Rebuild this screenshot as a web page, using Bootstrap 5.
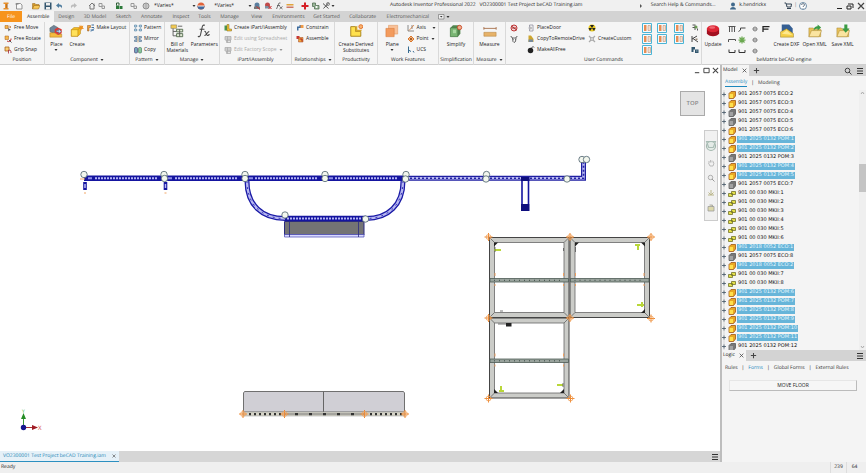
<!DOCTYPE html>
<html lang="en">
<head>
<meta charset="utf-8">
<meta name="viewport" content="width=device-width, initial-scale=1">
<title>Autodesk Inventor Professional 2022</title>
<link href="https://cdn.jsdelivr.net/npm/bootstrap@5.3.0/dist/css/bootstrap.min.css" rel="stylesheet">
<style>
body{font-family:"Open Sans","Noto Sans",sans-serif;font-size:5px;line-height:7px;color:#222;background:#f4f4f4;text-rendering:geometricPrecision}
svg{display:block;flex:none}
button,select,a{color:inherit}
.tool{border:0;background:none;padding:0;font-size:5px;line-height:7px;color:#222;white-space:nowrap}
.tool:disabled{color:#aaa;opacity:1}
.ic{width:8px;height:8px}
.ic-lg{width:14px;height:14px}
.ic-sm{width:4px;height:4px}
.titlebar{height:11px;background:#f0f0f0}
.quick{display:grid;grid-template-columns:13fr 17fr 12fr 11fr 15fr 17fr 10fr 17fr 15fr 12fr 12fr 43fr 17fr 38fr 11fr 11fr 11fr 15fr 11fr 10fr 9fr 5fr;flex:337 1 0;padding-left:2px;align-items:center}
.quick select{appearance:none;border:0;background:none;font-size:5px;line-height:7px;padding:0;width:34px}
.caption{flex:251 1 0;padding-left:54px;white-space:pre}
.winbar{display:grid;grid-template-columns:12fr 80fr 10fr 46fr 10fr 5fr 37fr 11fr 11fr 9fr;flex:229 1 0;align-items:center;white-space:nowrap}
.tabs{height:11px;background:#d3d3d3;display:grid;grid-template-columns:22fr 32fr 24fr 33fr 24fr 32fr 26fr 21fr 29fr 25fr 38fr 38fr 34fr 56fr 14fr 414fr;text-align:center;color:#555}
.tabs a,.tabs button{text-decoration:none;line-height:12px;color:#555;white-space:nowrap}
.tabs .file-tab{background:#f7941d;color:#fff}
.tabs .on{background:#f4f4f4;color:#111}
.ribbon{display:grid;grid-template-columns:45fr 85fr 35fr 55fr 72fr 43fr 43fr 61fr 35fr 32fr 196fr 164fr;height:43px;border-bottom:1px solid #cfcfcf;background:#f5f5f5}
.group{display:flex;flex-direction:column;min-width:0;border-right:1px solid #d9d9d9}
.group:last-child{border-right:0}
.group-body{display:grid;flex:1;min-height:0}
.group-name{height:10px;line-height:10px;text-align:center;white-space:nowrap;display:flex;align-items:center;justify-content:center;gap:2px}
.stack{display:grid;grid-template-rows:repeat(3,11px);min-width:0}
.stack .tool{display:flex;align-items:center;gap:2px}
.stack>svg{margin-top:3px}
.big{display:flex;flex-direction:column;align-items:center;padding-top:2px;line-height:6px}
.big .ic-lg{margin-bottom:3px}
.big .ic-sm{margin-top:1px}
.g-comp{grid-template-columns:23fr 19fr 43fr}
.g-man{grid-template-columns:25fr 30fr}
.g-work{grid-template-columns:29fr 32fr}
.g-user{grid-template-columns:17fr 61fr 54fr 15fr 17fr 17fr 10fr;padding-left:4px}
.g-be{grid-template-columns:22fr 10fr 13fr 11fr 15fr 27fr 29fr 27fr 10fr}
.tile{width:10px;height:10px}
.main-area{display:grid;grid-template-columns:720fr 146fr;grid-template-rows:minmax(0,1fr);flex:1;min-height:0}
.sheet{background:#fff;position:relative;overflow:hidden}
.sheet>svg{width:100%;height:100%}
.float-box{position:absolute;right:15px;top:26px;width:25px;height:25px;border:1px solid #aaa;background:#e4e4e4;color:#888;font-size:6px;font-weight:600;line-height:23px;text-align:center;padding:0}
.navtools{position:absolute;right:2px;top:65px;width:14px;border:1px solid #ccc;background:#f1f1f1;display:flex;flex-direction:column;align-items:center;gap:7px;padding:9px 0 8px}
.navtools button{border:0;background:none;padding:0}
.winctl{position:absolute;right:1px;top:2px;display:flex;gap:2px}
.winctl svg{width:7px;height:7px}
.docbar{height:11px;background:#d6d6d6}
.doc-tab{background:#e6f1f8;border-bottom:1px solid #2c8fc0;color:#2385b5;padding:0 3px;gap:4px;flex:113 1 0;line-height:10px}
.doc-rest{flex:599 1 0;padding-right:1px}
.status{height:11px;background:#efefef;line-height:11px;padding-left:1px}
.status .num{border-left:1px solid #ddd;width:16px;text-align:center}
.left{min-width:0}
.side{min-width:0;border-left:2px solid #bdbdbd;background:#f4f4f4}
.pane-a{flex:285 1 0;min-height:0}
.pane-b{flex:112 1 0;min-height:0}
.pane-head{height:11px;background:#d3d3d3;gap:4px;padding-right:2px;flex:none}
.pane-tab{background:#f4f4f4;padding:0 2px 0 1px;height:11px;gap:4px;line-height:11px}
.pane-nav{height:14px;padding-left:3px;gap:4px;flex:none;align-items:center}
.pane-nav a{text-decoration:none;color:#333;white-space:nowrap}
.pane-nav .cur{color:#1b87bd}
.pane-nav .cur-line{border-bottom:1px solid #1b87bd}
.tree{list-style:none;margin:0;padding:0;font-family:"DejaVu Sans",sans-serif;font-size:5px;line-height:9px;color:#111;overflow:hidden;flex:1}
.tree li{height:9px;display:flex;align-items:center;white-space:nowrap;gap:1px}
.tree li svg:first-child{width:4px;height:9px;margin-right:1px}
.tree span{line-height:7px;padding:0 1px}
.tree .sel span{background:#67b5d9;color:#e6f7ff}
.sbar{width:7px;background:#efefef;flex:none;display:flex;flex-direction:column;align-items:center}
.thumb{background:#c4c4c4;width:7px;height:28px;margin-top:69px}
.rule-btn{border:1px solid #e6e6e6;border-right-color:#bbb;border-bottom-color:#bbb;background:#f6f6f6;font-size:5px;line-height:9px;padding:0;margin:5px 9px 0 7px;display:block}
</style>
<script src="https://cdn.jsdelivr.net/npm/bootstrap@5.3.0/dist/js/bootstrap.bundle.min.js"></script>
</head>
<body class="vh-100 d-flex flex-column overflow-hidden">
<svg class="d-none" aria-hidden="true">
<symbol id="dn" viewBox="0 0 8 8"><path d="M1 2h6L4 6z" fill="#333"/></symbol>
<symbol id="x" viewBox="0 0 8 8"><path d="M1 1l6 6M7 1L1 7" stroke="#444" stroke-width="1.2"/></symbol>
<symbol id="plus" viewBox="0 0 8 8"><path d="M4 1v6M1 4h6" stroke="#444" stroke-width="1.2"/></symbol>
<symbol id="menu" viewBox="0 0 8 8"><path d="M1 1.5h6M1 4h6M1 6.5h6" stroke="#333"/></symbol>
<symbol id="mag" viewBox="0 0 8 8"><circle cx="3.5" cy="3.5" r="2.3" fill="none" stroke="#444"/><path d="M5 5l2.500 2.500" stroke="#444"/></symbol>
<symbol id="inv" viewBox="0 0 16 16"><path d="M3 1h10v3h-3v8h3v3H3v-3h3V4H3z" fill="#e8912d"/><path d="M9 4h2v8H9z" fill="#9b5410"/></symbol>
<symbol id="new" viewBox="0 0 16 16"><path d="M3 3h8l3 3v8H3z" fill="#f8f8f8" stroke="#777" stroke-width="1.500"/><path d="M1 4h6" stroke="#777" stroke-width="2"/></symbol>
<symbol id="open" viewBox="0 0 16 16"><path d="M1 14V3h5l2 2h6v3" fill="#d49a2a" stroke="#94641a"/><path d="M1 14l3-7h12l-3 7z" fill="#f7c757" stroke="#94641a"/></symbol>
<symbol id="save" viewBox="0 0 16 16"><path d="M1 1h14v14H1z" fill="#34566f"/><path d="M4 2h8v5H4zM4 10h8v5H4z" fill="#eee"/></symbol>
<symbol id="undo" viewBox="0 0 16 16"><path d="M8 2L2 7l6 5V9c4 0 5 1 5 4 3-5 0-8-5-8z" fill="#4e7c9e"/></symbol>
<symbol id="redo" viewBox="0 0 16 16"><path d="M8 2l6 5-6 5V9c-4 0-5 1-5 4-3-5 0-8 5-8z" fill="#bbb"/></symbol>
<symbol id="home" viewBox="0 0 16 16"><path d="M2 8l6-6 6 6M4 7v7h8V3" fill="none" stroke="#777" stroke-width="2"/></symbol>
<symbol id="pair" viewBox="0 0 16 16"><path d="M2 3h6v6H2zM8 8h5v5H8z" fill="none" stroke="#999" stroke-width="2"/></symbol>
<symbol id="lock" viewBox="0 0 16 16"><path d="M2 7h6v7H2zM9 8h6v6H9z" fill="#2c7a3a"/><path d="M3 7V2h5v5" fill="none" stroke="#315c38" stroke-width="2"/></symbol>
<symbol id="ball" viewBox="0 0 16 16"><circle cx="8" cy="8" r="6" fill="#ddd" stroke="#777" stroke-width="1.500"/><path d="M3 6h10M3 10h10M8 2v12" stroke="#888"/></symbol>
<symbol id="sphere" viewBox="0 0 16 16"><circle cx="8" cy="8" r="7" fill="#e0633b"/><path d="M1 8a7 7 0 0014 0z" fill="#416a9e"/><path d="M2 7h12v2H2z" fill="#eee"/></symbol>
<symbol id="sph2" viewBox="0 0 16 16"><circle cx="8" cy="6" r="5" fill="#5a7fa0"/><path d="M2 9h12v5H2z" fill="#777"/><path d="M7 9l7 6" stroke="#c33" stroke-width="2"/></symbol>
<symbol id="sph3" viewBox="0 0 16 16"><circle cx="7" cy="6" r="5" fill="#c04a4a"/><path d="M2 8h9v5H2z" fill="#7d8fa0"/><path d="M9 8l6 6M15 8l-6 6" stroke="#c22" stroke-width="2"/></symbol>
<symbol id="fxs" viewBox="0 0 16 16"><path d="M3 14L8 2h3M4 7h6M9 9l6 5M15 9l-6 5" fill="none" stroke="#555" stroke-width="1.600"/></symbol>
<symbol id="eq" viewBox="0 0 16 16"><path d="M1 4h14v3H1z" fill="#e2a43b"/><path d="M1 9h14v3H1z" fill="#c76"/></symbol>
<symbol id="cross" viewBox="0 0 16 16"><path d="M6 1h4v5h5v4h-5v5H6v-5H1V6h5z" fill="#d51f26"/></symbol>
<symbol id="gear" viewBox="0 0 16 16"><path d="M1 2h6v5h7v7H5V9H1z" fill="#9bb79b" stroke="#4e6b4e" stroke-width="1.500"/><circle cx="9" cy="10" r="2" fill="#fff"/></symbol>
<symbol id="tools" viewBox="0 0 16 16"><path d="M2 3l11 10M13 2L3 13" stroke="#555" stroke-width="2"/><circle cx="12" cy="4" r="3" fill="none" stroke="#666" stroke-width="1.500"/></symbol>
<symbol id="move" viewBox="0 0 16 16"><path d="M2 3h6v6H2z" fill="#f6b74a" stroke="#a65e1a"/><path d="M8 8l6 4-3 .5L9 15z" fill="#555"/><path d="M10 3v5M13 4v4" stroke="#c2712d" stroke-width="1.500"/></symbol>
<symbol id="rot" viewBox="0 0 16 16"><path d="M2 2h7v7H2z" fill="#f6b74a" stroke="#a65e1a"/><path d="M6 12a5 5 0 008-5" fill="none" stroke="#b33" stroke-width="2"/><path d="M10 10l5 5" stroke="#555" stroke-width="2"/></symbol>
<symbol id="grip" viewBox="0 0 16 16"><path d="M2 2h8v8H2z" fill="#f9cd73" stroke="#a65e1a" stroke-width="1.500"/><path d="M9 8v7M9 9c4-2 5 0 5 5" fill="none" stroke="#a34" stroke-width="1.700"/></symbol>
<symbol id="place" viewBox="0 0 32 32"><path d="M2 9l9-6 9 5v9l-9 5-9-5z" fill="#70869b" stroke="#455"/><path d="M2 20h12l3 3h12v7H2z" fill="#f4bb3f" stroke="#a86b18"/><path d="M13 12l7-4 9 4v9l-8 4-8-5z" fill="#dc3b34"/><path d="M17 15h5v-4l6 6-6 5v-4h-5z" fill="#bfe2fb" stroke="#357"/></symbol>
<symbol id="create" viewBox="0 0 32 32"><path d="M3 13l6-5h15v14l-6 6H3z" fill="#f3bc20" stroke="#a97200"/><path d="M3 13h15v15H3z" fill="#ffe15b" stroke="#a97200"/><path d="M18 13l6-5" stroke="#a97200"/><path d="M25 1l1.500 4 4-1.500L29 8l3 3-5 .5L25 16l-2-5-4-.5L22 7l-2-4 4 2z" fill="#ee9120"/></symbol>
<symbol id="layout" viewBox="0 0 16 16"><path d="M1 3h6v4H4v7H1z" fill="#f3a33d" stroke="#8d551f"/><path d="M9 2h5M9 7h5M7 12h7M14 9l-6 6" stroke="#3d6f9e" stroke-width="2"/></symbol>
<symbol id="patt" viewBox="0 0 16 16"><path d="M1 2h4v4H1zM11 2h4v4h-4zM1 10h4v4H1zM11 10h4v4h-4z" fill="#bcd7e9" stroke="#356b91"/><path d="M6 4h4M6 12h4M3 7v3M13 7v3" stroke="#356b91" stroke-dasharray="1 1"/></symbol>
<symbol id="mirr" viewBox="0 0 16 16"><path d="M1 3h5v10H1v-3h3V6H1zM15 3h-5v10h5v-3h-3V6h3z" fill="#a5bfd3" stroke="#385d80"/><path d="M8 1v14" stroke="#c83"/></symbol>
<symbol id="copy" viewBox="0 0 16 16"><rect x="1" y="3" width="6" height="11" rx="2" fill="#73a7bd" stroke="#315"/><rect x="9" y="3" width="6" height="11" rx="2" fill="#8cc69a" stroke="#264"/></symbol>
<symbol id="bom" viewBox="0 0 32 32"><path d="M2 2h13v8H2z" fill="#f2ca52" stroke="#665"/><path d="M7 10v17h8M7 17h8" fill="none" stroke="#555" stroke-width="2"/><path d="M15 12h14v6H15zM15 22h14v7H15z" fill="#dfe9d4" stroke="#4e6648" stroke-width="2"/><path d="M22 12v17M18 5h10" stroke="#555" stroke-width="2"/></symbol>
<symbol id="fx" viewBox="0 0 32 32"><path d="M18 3c-5-2-6 2-7 8L8 25c-1 4-3 5-6 3M6 12h11M17 17c4-2 4 11 8 9 2 0 3-2 3-3M28 17c-4 0-7 10-11 9" fill="none" stroke="#444" stroke-width="2.400"/></symbol>
<symbol id="ipart" viewBox="0 0 16 16"><path d="M1 3h6v10H1z" fill="#4a9650"/><path d="M6 1h4v9h5v4H6z" fill="#f0c43b" stroke="#856517"/></symbol>
<symbol id="dis" viewBox="0 0 16 16"><path d="M2 3h12v7H2zM5 10h8v5H5zM2 6h12M7 3v12" fill="#e4e4e4" stroke="#aaa" stroke-width="1.500"/></symbol>
<symbol id="cons" viewBox="0 0 16 16"><path d="M2 13V5h5V2h3v6H5v5z" fill="#3f6d9e"/><path d="M9 2h6v6H9z" fill="#f09b49"/></symbol>
<symbol id="asm" viewBox="0 0 16 16"><path d="M1 2h6v6H1z" fill="#c93535"/><path d="M5 5h9v9H5z" fill="#f2a83f" stroke="#9d3f20"/><path d="M7 8h5v5" fill="none" stroke="#a22" stroke-width="2"/></symbol>
<symbol id="derive" viewBox="0 0 32 32"><path d="M4 6h11v11h12v11H4z" fill="#ffe14e" stroke="#a27b12" stroke-width="2"/><path d="M15 17l4-4h11l-3 4zM15 17l4-4V4l-4 2z" fill="#d6a92a"/><circle cx="27" cy="6" r="4.500" fill="#f7b271" stroke="#e36c1f" stroke-width="2"/></symbol>
<symbol id="plane" viewBox="0 0 32 32"><path d="M8 3h21v20H8z" fill="#f9c198" stroke="#d9874b"/><path d="M2 10h19v19H2z" fill="#f39b5d" stroke="#d26c2a"/></symbol>
<symbol id="axis" viewBox="0 0 16 16"><path d="M2 2v12h12M10 2v8" fill="none" stroke="#666" stroke-width="1.500"/><path d="M4 13L14 2" stroke="#d9772d" stroke-width="1.500"/></symbol>
<symbol id="point" viewBox="0 0 16 16"><path d="M8 2l6 6-6 6-6-6z" fill="#f2b27c" stroke="#d9772d" stroke-width="2"/><circle cx="8" cy="8" r="2" fill="#8a4313"/></symbol>
<symbol id="ucs" viewBox="0 0 16 16"><path d="M3 1v13M3 8l5 3M12 10l2 3" fill="none" stroke="#356b91" stroke-width="2"/></symbol>
<symbol id="simp" viewBox="0 0 32 32"><path d="M3 9l6-6h17v19l-6 7H3z" fill="#52854f"/><path d="M3 9h17v20H3z" fill="#79b573" stroke="#3c6c3c"/><path d="M9 13h7v8H9z" fill="#a8d6a0"/><circle cx="24" cy="8" r="5" fill="#f0b18f" stroke="#c84727" stroke-width="2"/></symbol>
<symbol id="meas" viewBox="0 0 32 32"><path d="M2 10h28M2 7v6M30 7v6" stroke="#a56d46" stroke-width="2"/><path d="M2 19h28v9H2z" fill="#e6b269" stroke="#a9722b"/></symbol>
<symbol id="no" viewBox="0 0 16 16"><circle cx="8" cy="8" r="6" fill="#f4d5d5" stroke="#bd3434" stroke-width="2"/><path d="M3 4l10 8M4 8h8" stroke="#a33" stroke-width="2"/></symbol>
<symbol id="bull" viewBox="0 0 16 16"><path d="M2 2c0 4 3 3 5 4h2c2-1 5 0 5-4M5 6l1 7 2 2 3-2 1-7M6 9h1M10 9h1" fill="none" stroke="#333" stroke-width="1.500"/></symbol>
<symbol id="door" viewBox="0 0 16 16"><path d="M5 2h7v12H5zM3 8h6" fill="none" stroke="#889" stroke-width="1.500"/><circle cx="7" cy="8" r="3" fill="#bbb"/></symbol>
<symbol id="drive" viewBox="0 0 16 16"><path d="M3 1h5l5 7v6H3z" fill="#cda52e"/><path d="M3 9h9v5H3z" fill="#788a99"/></symbol>
<symbol id="bomb" viewBox="0 0 16 16"><circle cx="7" cy="9" r="5.500" fill="#222"/><path d="M9 4l3-3 2 2" fill="none" stroke="#444" stroke-width="2"/></symbol>
<symbol id="rad" viewBox="0 0 16 16"><circle cx="8" cy="8" r="7" fill="#e8c81f"/><path d="M8 8L4 2h8zM8 8H1l3 6zM8 8h7l-3 6z" fill="#222"/></symbol>
<symbol id="cust" viewBox="0 0 16 16"><path d="M2 2l12 12M14 2L2 14" stroke="#aaa" stroke-width="2.500"/><circle cx="8" cy="8" r="3" fill="#ddd" stroke="#888"/></symbol>
<symbol id="tile" viewBox="0 0 20 20"><path d="M1 1h18v18H1z" fill="#f4fbff" stroke="#4bb4d5" stroke-width="2"/><path d="M4 4h5v12H4z" fill="#e88e55"/><path d="M12 5h5v10h-5z" fill="#f2ddcd" stroke="#b98365"/></symbol>
<symbol id="ma" viewBox="0 0 16 16"><path d="M3 2h6M3 7h9M8 3v9M13 9v4" stroke="#555" stroke-width="2"/><circle cx="10" cy="6" r="3" fill="#6a9a55"/></symbol>
<symbol id="mb" viewBox="0 0 16 16"><path d="M2 2v12M2 8l10-6M4 7l10 7" stroke="#444" stroke-width="2"/><path d="M9 7h4v3H9z" fill="#987"/></symbol>
<symbol id="mc" viewBox="0 0 16 16"><path d="M1 2h7v5H5v5H1zM8 7h7v7H8z" fill="#31566e"/><path d="M10 10h3" stroke="#fff"/></symbol>
<symbol id="update" viewBox="0 0 32 32"><path d="M2 11v10c3 9 25 9 28 0V11z" fill="#a31020"/><ellipse cx="16" cy="11" rx="14" ry="8" fill="#dc2534"/><ellipse cx="14" cy="8" rx="7" ry="3" fill="#ef6670"/></symbol>
<symbol id="l1" viewBox="0 0 16 16"><path d="M1 3h14M3 3v11M8 3v11M13 3v11" stroke="#555" stroke-width="2"/></symbol>
<symbol id="l2" viewBox="0 0 16 16"><path d="M1 13l4-3V6h10" fill="none" stroke="#444" stroke-width="2"/></symbol>
<symbol id="l3" viewBox="0 0 16 16"><circle cx="8" cy="8" r="4" fill="#ccc" stroke="#888" stroke-width="2"/><path d="M3 8h10" stroke="#777"/></symbol>
<symbol id="l4" viewBox="0 0 16 16"><path d="M2 14V3h13M2 8h11" fill="none" stroke="#222" stroke-width="2.500"/></symbol>
<symbol id="l5" viewBox="0 0 16 16"><path d="M1 12V7h14v3" fill="none" stroke="#555" stroke-width="2"/></symbol>
<symbol id="l6" viewBox="0 0 16 16"><path d="M8 1v14M1 8h14M3 3l10 10M13 3L3 13" stroke="#6aa84f" stroke-width="2.500"/></symbol>
<symbol id="l7" viewBox="0 0 16 16"><path d="M2 5v6h12V6" fill="none" stroke="#333" stroke-width="2"/></symbol>
<symbol id="dxf" viewBox="0 0 32 32"><path d="M4 1h17l8 9v12H4z" fill="#355f93"/><path d="M1 18l14-7 16 11v8H1z" fill="#f4cf48" stroke="#8a7428"/><path d="M4 22l11-8 13 11z" fill="#ffe98e"/></symbol>
<symbol id="oxml" viewBox="0 0 32 32"><path d="M2 9h10l3 3h14v17H2z" fill="#e7c25b" stroke="#a17b25"/><path d="M2 29l6-14h23l-6 14z" fill="#fae4a0" stroke="#a17b25"/><path d="M13 15c0-8 5-10 9-10V1l8 7-8 7v-4c-4 0-6 0-9 4z" fill="#3b9b45"/></symbol>
<symbol id="sxml" viewBox="0 0 32 32"><path d="M2 9h10l3 3h14v17H2z" fill="#e7c25b" stroke="#a17b25"/><path d="M2 29l6-14h23l-6 14z" fill="#fae4a0" stroke="#a17b25"/><path d="M19 1h7v9h5l-9 10-8-10h5z" fill="#3b9b45"/></symbol>
<symbol id="user" viewBox="0 0 16 16"><circle cx="8" cy="5" r="4" fill="#41698c"/><path d="M2 15c0-7 12-7 12 0z" fill="#41698c"/></symbol>
<symbol id="cart" viewBox="0 0 16 16"><path d="M1 2h3l2 8h8l1-6H5M6 13h8" fill="none" stroke="#345" stroke-width="2"/></symbol>
<symbol id="help" viewBox="0 0 16 16"><circle cx="8" cy="8" r="7" fill="#fff" stroke="#41698c" stroke-width="1.500"/><path d="M5 6c1-4 6-3 6 0 0 2-3 2-3 4M8 12v1" fill="none" stroke="#345" stroke-width="1.600"/></symbol>
<symbol id="min" viewBox="0 0 8 8"><path d="M1 6.500h5" stroke="#222"/></symbol>
<symbol id="max" viewBox="0 0 8 8"><path d="M1 1.500h6v5H1z" fill="none" stroke="#333"/></symbol>
<symbol id="rest" viewBox="0 0 8 8"><path d="M2 2h5v4M1 4h4v3H1z" fill="none" stroke="#222"/></symbol>
<symbol id="exp" viewBox="0 0 4 9"><path d="M2 0v9" stroke="#bbb" stroke-width=".5"/><path d="M0 4.500h4M2 2.500v4" stroke="#456" stroke-width=".8"/></symbol>
<symbol id="cy" viewBox="0 0 16 16"><path d="M2 5l4-4h9v9l-4 5H2z" fill="#e9a823" stroke="#9c4f10" stroke-width="1.500"/><path d="M3 6h7v8H3z" fill="#ffe04c"/></symbol>
<symbol id="cg" viewBox="0 0 16 16"><path d="M2 5l4-4h9v9l-4 5H2z" fill="#777" stroke="#555" stroke-width="1.500"/><path d="M3 6h7v8H3z" fill="#a2a2a2"/></symbol>
<symbol id="mk" viewBox="0 0 16 16"><path d="M1 7h8v6H1zM7 3h8v6H7z" fill="#e3df49" stroke="#6c6b24" stroke-width="1.500"/></symbol>
<symbol id="wheel" viewBox="0 0 16 16"><circle cx="8" cy="8" r="6" fill="#e4ebe7" stroke="#a3b8ae" stroke-width="1.600"/><path d="M2 2h12l-3 8H5z" fill="none" stroke="#a9bdb5" stroke-width="1.500"/></symbol>
<symbol id="hand" viewBox="0 0 16 16"><path d="M4 8V4M7 7V2M10 7V3M13 8V5M3 8l3 6h6l2-6" fill="none" stroke="#aaa" stroke-width="1.500"/></symbol>
<symbol id="zoom" viewBox="0 0 16 16"><circle cx="7" cy="7" r="4.500" fill="#eee" stroke="#999" stroke-width="1.500"/><path d="M10 10l5 5" stroke="#999" stroke-width="2"/></symbol>
<symbol id="orbit" viewBox="0 0 16 16"><path d="M8 2v9M3 7l5 5 5-5M2 12h12" fill="none" stroke="#bbb78c" stroke-width="2"/></symbol>
<symbol id="look" viewBox="0 0 16 16"><path d="M2 5h12v9H2zM5 2h6v3" fill="#ddd9ac" stroke="#999" stroke-width="1.500"/></symbol>
<symbol id="drop" viewBox="0 0 16 12"><path d="M1 1h11v9H1z" fill="#eee" stroke="#555"/><path d="M4 4h5L6.500 7z" fill="#333"/></symbol>
</svg>

<header class="titlebar d-flex align-items-center">
<div class="quick">
<svg class="ic"><use href="#inv"/></svg><svg class="ic"><use href="#new"/></svg><svg class="ic"><use href="#open"/></svg><svg class="ic"><use href="#save"/></svg><svg class="ic"><use href="#undo"/></svg><svg class="ic"><use href="#redo"/></svg><svg class="ic"><use href="#home"/></svg><svg class="ic"><use href="#pair"/></svg><svg class="ic"><use href="#lock"/></svg><svg class="ic"><use href="#pair"/></svg><svg class="ic"><use href="#ball"/></svg>
<div class="d-flex align-items-center gap-1"><select aria-label="Material"><option>*Varies*</option></select><svg class="ic-sm"><use href="#dn"/></svg></div>
<svg class="ic"><use href="#sphere"/></svg>
<div class="d-flex align-items-center"><select aria-label="Appearance"><option>*Varies*</option></select><svg class="ic-sm"><use href="#dn"/></svg></div>
<svg class="ic"><use href="#sph2"/></svg><svg class="ic"><use href="#sph3"/></svg><svg class="ic"><use href="#fxs"/></svg><svg class="ic"><use href="#eq"/></svg><svg class="ic"><use href="#cross"/></svg><svg class="ic"><use href="#gear"/></svg><svg class="ic"><use href="#tools"/></svg><svg class="ic-sm"><use href="#dn"/></svg>
</div>
<div class="caption">Autodesk Inventor Professional 2022   VO2300001 Test Project beCAD Training.iam</div>
<div class="winbar"><svg class="ic-sm"><path d="M1 0l2 2-2 2z" fill="#555"/></svg><span>Search Help &amp; Commands...</span><svg class="ic"><use href="#user"/></svg><span>k.hendrickx</span><svg class="ic"><use href="#cart"/></svg><span class="text-secondary">|</span><svg class="ic"><use href="#help"/></svg>
<button class="tool" aria-label="Minimize"><svg class="ic"><use href="#min"/></svg></button><button class="tool" aria-label="Restore"><svg class="ic"><use href="#rest"/></svg></button><button class="tool" aria-label="Close"><svg class="ic"><use href="#x"/></svg></button></div>
</header>

<nav class="tabs">
<a href="#" class="file-tab">File</a><a href="#" class="on">Assemble</a><a href="#">Design</a><a href="#">3D Model</a><a href="#">Sketch</a><a href="#">Annotate</a><a href="#">Inspect</a><a href="#">Tools</a><a href="#">Manage</a><a href="#">View</a><a href="#">Environments</a><a href="#">Get Started</a><a href="#">Collaborate</a><a href="#">Electromechanical</a>
<button class="tool d-flex align-items-center justify-content-end" aria-label="Ribbon display"><svg width="8" height="6"><use href="#drop"/></svg><svg class="ic-sm"><use href="#dn"/></svg></button>
</nav>

<section class="ribbon">
<div class="group"><div class="group-body ps-1"><div class="stack">
<button class="tool"><svg class="ic"><use href="#move"/></svg>Free Move</button><button class="tool"><svg class="ic"><use href="#rot"/></svg>Free Rotate</button><button class="tool"><svg class="ic"><use href="#grip"/></svg>Grip Snap</button></div></div><div class="group-name">Position</div></div>
<div class="group"><div class="group-body g-comp">
<button class="tool big"><svg class="ic-lg"><use href="#place"/></svg>Place<svg class="ic-sm"><use href="#dn"/></svg></button>
<button class="tool big"><svg class="ic-lg"><use href="#create"/></svg>Create</button>
<div class="stack"><button class="tool"><svg class="ic"><use href="#layout"/></svg>Make Layout</button></div></div><div class="group-name">Component <svg class="ic-sm"><use href="#dn"/></svg></div></div>
<div class="group"><div class="group-body ps-1"><div class="stack">
<button class="tool"><svg class="ic"><use href="#patt"/></svg>Pattern</button><button class="tool"><svg class="ic"><use href="#mirr"/></svg>Mirror</button><button class="tool"><svg class="ic"><use href="#copy"/></svg>Copy</button></div></div><div class="group-name">Pattern <svg class="ic-sm"><use href="#dn"/></svg></div></div>
<div class="group"><div class="group-body g-man">
<button class="tool big"><svg class="ic-lg"><use href="#bom"/></svg>Bill of<br>Materials</button>
<button class="tool big"><svg class="ic-lg"><use href="#fx"/></svg>Parameters</button></div><div class="group-name">Manage <svg class="ic-sm"><use href="#dn"/></svg></div></div>
<div class="group"><div class="group-body ps-1"><div class="stack">
<button class="tool"><svg class="ic"><use href="#ipart"/></svg>Create iPart/iAssembly</button><button class="tool" disabled><svg class="ic"><use href="#dis"/></svg>Edit using Spreadsheet</button><button class="tool" disabled><svg class="ic"><use href="#dis"/></svg>Edit Factory Scope <svg class="ic-sm opacity-50"><use href="#dn"/></svg></button></div></div><div class="group-name">iPart/iAssembly</div></div>
<div class="group"><div class="group-body ps-1"><div class="stack">
<button class="tool"><svg class="ic"><use href="#cons"/></svg>Constrain</button><button class="tool"><svg class="ic"><use href="#asm"/></svg>Assemble</button></div></div><div class="group-name">Relationships <svg class="ic-sm"><use href="#dn"/></svg></div></div>
<div class="group"><div class="group-body">
<button class="tool big"><svg class="ic-lg"><use href="#derive"/></svg>Create Derived<br>Substitutes</button></div><div class="group-name">Productivity</div></div>
<div class="group"><div class="group-body g-work">
<button class="tool big"><svg class="ic-lg"><use href="#plane"/></svg>Plane<svg class="ic-sm"><use href="#dn"/></svg></button>
<div class="stack"><button class="tool"><svg class="ic"><use href="#axis"/></svg>Axis <svg class="ic-sm ms-1"><use href="#dn"/></svg></button><button class="tool"><svg class="ic"><use href="#point"/></svg>Point <svg class="ic-sm"><use href="#dn"/></svg></button><button class="tool"><svg class="ic"><use href="#ucs"/></svg>UCS</button></div></div><div class="group-name">Work Features</div></div>
<div class="group"><div class="group-body"><button class="tool big"><svg class="ic-lg"><use href="#simp"/></svg>Simplify</button></div><div class="group-name">Simplification</div></div>
<div class="group"><div class="group-body"><button class="tool big"><svg class="ic-lg"><use href="#meas"/></svg>Measure</button></div><div class="group-name">Measure <svg class="ic-sm"><use href="#dn"/></svg></div></div>
<div class="group"><div class="group-body g-user">
<div class="stack"><button class="tool" aria-label="Stop"><svg class="ic"><use href="#no"/></svg></button><button class="tool" aria-label="Bull"><svg class="ic"><use href="#bull"/></svg></button></div>
<div class="stack"><button class="tool"><svg class="ic"><use href="#door"/></svg>PlaceDoor</button><button class="tool"><svg class="ic"><use href="#drive"/></svg>CopyToRemoteDrive</button><button class="tool"><svg class="ic"><use href="#bomb"/></svg>MakeAllFree</button></div>
<div class="stack"><button class="tool" aria-label="Radiation"><svg class="ic"><use href="#rad"/></svg></button><button class="tool"><svg class="ic"><use href="#cust"/></svg>CreateCustom</button></div>
<div class="stack"><button class="tool" aria-label="Panel 1"><svg class="tile"><use href="#tile"/></svg></button><button class="tool" aria-label="Panel 2"><svg class="tile"><use href="#tile"/></svg></button><button class="tool" aria-label="Panel 3"><svg class="tile"><use href="#tile"/></svg></button></div>
<div class="stack"><button class="tool" aria-label="Panel 4"><svg class="tile"><use href="#tile"/></svg></button><button class="tool" aria-label="Panel 5"><svg class="tile"><use href="#tile"/></svg></button></div>
<div class="stack"><button class="tool" aria-label="Panel 6"><svg class="tile"><use href="#tile"/></svg></button><button class="tool" aria-label="Panel 7"><svg class="tile"><use href="#tile"/></svg></button></div>
<div class="stack"><button class="tool" aria-label="Link"><svg class="ic"><use href="#ma"/></svg></button><button class="tool" aria-label="Split"><svg class="ic"><use href="#mb"/></svg></button><button class="tool" aria-label="Swap"><svg class="ic"><use href="#mc"/></svg></button></div>
</div><div class="group-name">User Commands</div></div>
<div class="group"><div class="group-body g-be">
<button class="tool big"><svg class="ic-lg"><use href="#update"/></svg>Update</button>
<div class="stack ps-1"><svg class="ic"><use href="#l1"/></svg><svg class="ic"><use href="#l5"/></svg><svg class="ic"><use href="#l7"/></svg></div>
<div class="stack ps-1"><svg class="ic"><use href="#l2"/></svg><svg class="ic"><use href="#l6"/></svg><svg class="ic"><use href="#l7"/></svg></div>
<div class="stack ps-1"><svg class="ic"><use href="#l3"/></svg><svg class="ic"><use href="#l3"/></svg><svg class="ic"><use href="#l3"/></svg></div>
<div class="stack ps-1"><svg class="ic"><use href="#l4"/></svg></div>
<button class="tool big"><svg class="ic-lg"><use href="#dxf"/></svg>Create DXF</button>
<button class="tool big"><svg class="ic-lg"><use href="#oxml"/></svg>Open XML</button>
<button class="tool big"><svg class="ic-lg"><use href="#sxml"/></svg>Save XML</button>
</div><div class="group-name">beMatrix beCAD engine</div></div>
</section>

<main class="main-area">
<div class="left d-flex flex-column">
<div class="sheet flex-grow-1">
<svg viewBox="0 65 720 386" preserveAspectRatio="xMinYMin meet" role="img" aria-label="Top view of the stand assembly">
<defs>
<g id="node"><circle r="3.200" fill="#f3f7ee" stroke="#4a5f6c" stroke-width=".8"/></g>
<g id="mark"><path d="M-4 0h8M0-4v8" stroke="#ee8a35" stroke-width="1"/><circle r="2.400" fill="none" stroke="#f0a35c" stroke-width=".9"/></g>
<g id="frame"><path d="M.5.500h79.500v80H.500z" fill="#cbccc8" stroke="#444"/><path d="M5.500 5.500h69.500v70H5.500z" fill="#fff" stroke="#666" stroke-width=".8"/><path d="M.5.500l5 5M80 .5l-5 5M.5 80.500l5-5M80 80.500l-5-5" stroke="#555" stroke-width=".7"/><path d="M1 41.500h78.500v3.500H1z" fill="#98a29c" stroke="#4c5a54" stroke-width=".8"/><path d="M5 43.300h70" stroke="#3b4a44" stroke-width="1" stroke-dasharray="1 4"/><path d="M6 36v3M74.500 36v3M6 47v2M74.500 47v2" stroke="#f0a060"/></g>
</defs>
<g fill="none">
<path d="M247 181C247 205 262 218.500 285 218.500M403 181C403 205 388 218.500 366 218.500" stroke="#1a1aa6" stroke-width="5"/>
<path d="M247 181C247 205 262 218.500 285 218.500M403 181C403 205 388 218.500 366 218.500" stroke="#b9b9f2" stroke-width="2.400"/>
<path d="M247 181C247 205 262 218.500 285 218.500M403 181C403 205 388 218.500 366 218.500" stroke="#3636b4" stroke-width="1" stroke-dasharray="2 4"/>
<path d="M84 178.300h322M285 218.500h81" stroke="#1515a0" stroke-width="5.400"/>
<path d="M95 178.300h62M175 178.300h62M255 178.300h62M335 178.300h62M287 218.500h78" stroke="#b4b4f4" stroke-width="2" stroke-dasharray="2 1"/>
<path d="M88 178.300h4M168 178.300h4M249 178.300h4M329 178.300h4" stroke="#8d8de6" stroke-width="2"/>
<path d="M405 178.300h178.500V160" stroke="#1f1fa2" stroke-width="5"/>
<path d="M405 178.300h178.500V160" stroke="#b9b9f2" stroke-width="2.600"/>
<path d="M410 178.300h173.500V160" stroke="#2424a4" stroke-width="1.600" stroke-dasharray="2 2"/>
<path d="M85 182v8M165.500 182v8" stroke="#1515a0" stroke-width="3.600"/><path d="M85 184v4M165.500 184v4" stroke="#b9b9f2" stroke-width="1.500"/>
<path d="M522 177v34M528.500 177v34" stroke="#1515a0" stroke-width="1.600"/>
</g>
<path d="M521 177h8.300v4H521zM521 204h8.300v7H521z" fill="#0e0e7e"/>
<path d="M284.500 221.500h79.500v13.500h-79.500z" fill="#747474" stroke="#2b2b80"/><path d="M284.500 234.500h79.500v2.500h-79.500z" fill="#dadaff" stroke="#4545b2" stroke-width=".7"/><path d="M289.500 221v16M358.500 221v16" stroke="#2b2b80" stroke-width=".8"/>
<path d="M80 179h5M84 193h2M164.500 193h2" stroke="#f3a768" stroke-width="1.200"/>
<use href="#node" x="84" y="174.500"/><use href="#node" x="164" y="174.500"/><use href="#node" x="164.500" y="178.500"/><use href="#node" x="245" y="174.500"/><use href="#node" x="245" y="178.500"/><use href="#node" x="325" y="174.500"/><use href="#node" x="325" y="178.500"/><use href="#node" x="406" y="174.500"/><use href="#node" x="405.500" y="179"/><use href="#node" x="486.500" y="174.500"/><use href="#node" x="486" y="179"/><use href="#node" x="567" y="179"/><use href="#node" x="582" y="159.500"/><use href="#node" x="586.500" y="159.500"/><use href="#node" x="285" y="215"/><use href="#node" x="365.500" y="219"/>
<use href="#frame" x="489" y="237"/><use href="#frame" x="569.500" y="237"/><use href="#frame" x="489" y="317.500"/>
<g fill="#222"><path d="M494 242.500h4l-4 4zM575 242.500h4l-4 4zM645 242.500h-4l4 4zM645 313h-4l4-4zM506 323h5.500v3.500H506zM494 393h4l-4-4zM564 393h-4l4-4z"/></g>
<path d="M494 250h7M635 245h5M638 246v4M637 305h7M642 302v5M499 391h5M501 386v5M557 385h6" stroke="#b9d739" stroke-width="2"/><path d="M495 247v5M563.500 248v3M575.500 247v5M498 324h8M500 311h3M563 383v4" stroke="#555" stroke-width=".8"/>
<use href="#mark" x="488.500" y="237"/><use href="#mark" x="570" y="237"/><use href="#mark" x="651" y="237"/><use href="#mark" x="488.500" y="318"/><use href="#mark" x="570" y="318"/><use href="#mark" x="651" y="318.500"/><use href="#mark" x="488.500" y="398.500"/><use href="#mark" x="570.500" y="398.500"/>
<path d="M243.500 412v-19l1-1.500h159l1 1.500v19z" fill="#d0cfd5" stroke="#707070"/><path d="M323.500 391.500V412" stroke="#666"/>
<path d="M243 412h162v4H243z" fill="#d4d2c6" stroke="#999" stroke-width=".5"/><path d="M284 414h81" stroke="#777"/><path d="M249 414.200h32M370 414.200h32" stroke="#333" stroke-width="2.200" stroke-dasharray="2 3"/><path d="M295 414.200h60" stroke="#333" stroke-width="2.200" stroke-dasharray="3 11"/>
<use href="#mark" x="243" y="414"/><use href="#mark" x="284.500" y="414"/><use href="#mark" x="364.500" y="414"/><use href="#mark" x="405" y="414"/>
<path d="M23.500 427.500V416" stroke="#3a993a"/><path d="M21 419l2.500-6 2.500 6z" fill="#258d25"/><path d="M24 427.500h10" stroke="#a33"/><path d="M32 425l6 2.500-6 2.500z" fill="#a01a24"/><circle cx="23.500" cy="427.500" r="2.700" fill="#16168e"/>
<text x="22" y="413" font-size="5" fill="#4b4">Y</text><text x="38" y="430" font-size="6" fill="#c33">X</text>
</svg>
<div class="winctl"><svg><use href="#min"/></svg><svg><use href="#max"/></svg><svg><use href="#x"/></svg></div>
<button class="float-box">TOP</button>
<div class="navtools"><button aria-label="Wheel"><svg width="12" height="12"><use href="#wheel"/></svg></button><button aria-label="Pan"><svg class="ic"><use href="#hand"/></svg></button><button aria-label="Zoom"><svg class="ic"><use href="#zoom"/></svg></button><button aria-label="Orbit"><svg class="ic"><use href="#orbit"/></svg></button><button aria-label="Look at"><svg class="ic"><use href="#look"/></svg></button></div>
</div>
<div class="docbar d-flex"><a href="#" class="doc-tab d-flex align-items-center justify-content-between text-decoration-none text-nowrap">VO2300001 Test Project beCAD Training.iam<svg class="ic-sm"><use href="#x"/></svg></a><div class="doc-rest d-flex align-items-center justify-content-end"><svg class="ic"><use href="#menu"/></svg></div></div>
</div>

<aside class="side d-flex flex-column">
<div class="pane-a d-flex flex-column">
<div class="pane-head d-flex align-items-center"><div class="pane-tab d-flex align-items-center">Model <svg width="5" height="5"><use href="#x"/></svg></div><svg width="7" height="7"><use href="#plus"/></svg><svg class="ic ms-auto"><use href="#mag"/></svg><svg class="ic"><use href="#menu"/></svg></div>
<nav class="pane-nav d-flex"><a href="#" class="cur cur-line">Assembly</a><span>|</span><a href="#">Modeling</a></nav>
<div class="d-flex flex-grow-1 overflow-hidden">
<ul class="tree">
<li><svg><use href="#exp"/></svg><svg class="ic"><use href="#cy"/></svg><span>901 2057 0075 ECO:2</span></li>
<li><svg><use href="#exp"/></svg><svg class="ic"><use href="#cy"/></svg><span>901 2057 0075 ECO:3</span></li>
<li><svg><use href="#exp"/></svg><svg class="ic"><use href="#cg"/></svg><span>901 2057 0075 ECO:4</span></li>
<li><svg><use href="#exp"/></svg><svg class="ic"><use href="#cg"/></svg><span>901 2057 0075 ECO:5</span></li>
<li><svg><use href="#exp"/></svg><svg class="ic"><use href="#cy"/></svg><span>901 2057 0075 ECO:6</span></li>
<li class="sel"><svg><use href="#exp"/></svg><svg class="ic"><use href="#cy"/></svg><span>901 2025 0132 POM:1</span></li>
<li class="sel"><svg><use href="#exp"/></svg><svg class="ic"><use href="#cy"/></svg><span>901 2025 0132 POM:2</span></li>
<li><svg><use href="#exp"/></svg><svg class="ic"><use href="#cg"/></svg><span>901 2025 0132 POM:3</span></li>
<li class="sel"><svg><use href="#exp"/></svg><svg class="ic"><use href="#cy"/></svg><span>901 2025 0132 POM:4</span></li>
<li class="sel"><svg><use href="#exp"/></svg><svg class="ic"><use href="#cy"/></svg><span>901 2025 0132 POM:5</span></li>
<li><svg><use href="#exp"/></svg><svg class="ic"><use href="#cg"/></svg><span>901 2057 0075 ECO:7</span></li>
<li><svg><use href="#exp"/></svg><svg class="ic"><use href="#mk"/></svg><span>901 00 030 MKII:1</span></li>
<li><svg><use href="#exp"/></svg><svg class="ic"><use href="#mk"/></svg><span>901 00 030 MKII:2</span></li>
<li><svg><use href="#exp"/></svg><svg class="ic"><use href="#mk"/></svg><span>901 00 030 MKII:3</span></li>
<li><svg><use href="#exp"/></svg><svg class="ic"><use href="#mk"/></svg><span>901 00 030 MKII:4</span></li>
<li><svg><use href="#exp"/></svg><svg class="ic"><use href="#mk"/></svg><span>901 00 030 MKII:5</span></li>
<li><svg><use href="#exp"/></svg><svg class="ic"><use href="#mk"/></svg><span>901 00 030 MKII:6</span></li>
<li class="sel"><svg><use href="#exp"/></svg><svg class="ic"><use href="#cy"/></svg><span>901 2018 0052 ECO:1</span></li>
<li><svg><use href="#exp"/></svg><svg class="ic"><use href="#cg"/></svg><span>901 2057 0075 ECO:8</span></li>
<li class="sel"><svg><use href="#exp"/></svg><svg class="ic"><use href="#cy"/></svg><span>901 2018 0052 ECO:2</span></li>
<li><svg><use href="#exp"/></svg><svg class="ic"><use href="#mk"/></svg><span>901 00 030 MKII:7</span></li>
<li><svg><use href="#exp"/></svg><svg class="ic"><use href="#mk"/></svg><span>901 00 030 MKII:8</span></li>
<li class="sel"><svg><use href="#exp"/></svg><svg class="ic"><use href="#cy"/></svg><span>901 2025 0132 POM:6</span></li>
<li class="sel"><svg><use href="#exp"/></svg><svg class="ic"><use href="#cy"/></svg><span>901 2025 0132 POM:7</span></li>
<li class="sel"><svg><use href="#exp"/></svg><svg class="ic"><use href="#cy"/></svg><span>901 2025 0132 POM:8</span></li>
<li class="sel"><svg><use href="#exp"/></svg><svg class="ic"><use href="#cy"/></svg><span>901 2025 0132 POM:9</span></li>
<li class="sel"><svg><use href="#exp"/></svg><svg class="ic"><use href="#cy"/></svg><span>901 2025 0132 POM:10</span></li>
<li class="sel"><svg><use href="#exp"/></svg><svg class="ic"><use href="#cy"/></svg><span>901 2025 0132 POM:11</span></li>
<li><svg><use href="#exp"/></svg><svg class="ic"><use href="#cg"/></svg><span>901 2025 0132 POM:12</span></li>
</ul>
<div class="sbar"><svg width="5" height="5"><path d="M1 4l1.500-2L4 4" fill="none" stroke="#aaa"/></svg><div class="thumb"></div><svg class="mt-auto" width="5" height="5"><path d="M1 1l1.500 2L4 1" fill="none" stroke="#aaa"/></svg></div>
</div></div>
<div class="pane-b">
<div class="pane-head d-flex align-items-center"><div class="pane-tab d-flex align-items-center">Logic <svg width="5" height="5"><use href="#x"/></svg></div><svg width="7" height="7"><use href="#plus"/></svg><svg class="ic ms-auto"><use href="#menu"/></svg></div>
<nav class="pane-nav d-flex"><a href="#">Rules</a><span>|</span><a href="#" class="cur">Forms</a><span>|</span><a href="#">Global Forms</a><span>|</span><a href="#">External Rules</a></nav>
<div class="d-grid"><button class="rule-btn">MOVE FLOOR</button></div>
</div>
</aside>
</main>
<footer class="status d-flex"><span class="me-auto">Ready</span><span class="num">239</span><span class="num me-1">64</span></footer>
</body>
</html>
